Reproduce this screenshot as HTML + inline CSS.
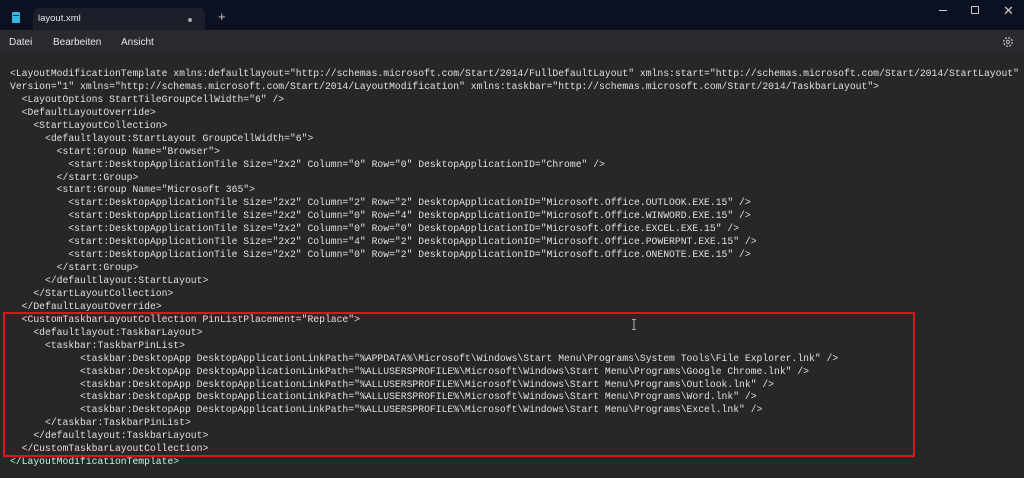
<!DOCTYPE html>
<html><head><meta charset="utf-8"><style>
body{margin:0;width:1024px;height:478px;background:#272727;overflow:hidden;position:relative;font-family:"Liberation Sans",sans-serif}
.title{position:absolute;left:0;top:0;width:1024px;height:30px;background:#0c1121}
.tab{position:absolute;left:33px;top:8px;width:172px;height:22px;background:#1c1f2a;border-radius:6px 6px 0 0}
.menu{position:absolute;left:0;top:30px;width:1024px;height:24px;background:#282a30}
.t{position:absolute;color:#e6e6e6;font-size:10px}
pre{position:absolute;left:10px;top:68px;margin:0;font-family:"Liberation Mono",monospace;font-size:9.73px;line-height:12.93px;color:#e0e0e0}
.box{position:absolute;left:3px;top:312px;width:908px;height:141px;border:2px solid #e0141a}
</style></head><body>
<div class="title"></div>
<div class="tab"></div>
<div style="position:absolute;left:12px;top:12px;width:8px;height:11px;background:#38b6e6;border-radius:1px"></div>
<div style="position:absolute;left:13px;top:15px;width:6px;height:1px;background:#0c3d55"></div>
<div class="t" style="left:38px;top:13px;font-size:9.5px">layout.xml</div>
<div style="position:absolute;left:188px;top:18px;width:4px;height:4px;border-radius:50%;background:#aaa"></div>
<div class="t" style="left:218px;top:9px;font-size:13px;color:#ccc">+</div>
<div style="position:absolute;left:939px;top:10px;width:8px;height:1px;background:#ccc"></div>
<div style="position:absolute;left:971px;top:6px;width:6px;height:6px;border:1px solid #ccc;border-radius:1px"></div>
<div class="t" style="left:1003px;top:3px;font-size:13px;color:#ccc">✕</div>
<div class="menu"></div>
<div class="t" style="left:9px;top:37px">Datei</div>
<div class="t" style="left:53px;top:37px">Bearbeiten</div>
<div class="t" style="left:121px;top:37px">Ansicht</div>
<svg style="position:absolute;left:1002px;top:36px" width="12" height="12" viewBox="0 0 12 12"><circle cx="6" cy="6" r="4.3" fill="none" stroke="#bbb" stroke-width="1.3" stroke-dasharray="2 1.4"/><circle cx="6" cy="6" r="1.6" fill="none" stroke="#bbb"/></svg>
<pre>&lt;LayoutModificationTemplate xmlns:defaultlayout="http://schemas.microsoft.com/Start/2014/FullDefaultLayout" xmlns:start="http://schemas.microsoft.com/Start/2014/StartLayout"
Version="1" xmlns="http://schemas.microsoft.com/Start/2014/LayoutModification" xmlns:taskbar="http://schemas.microsoft.com/Start/2014/TaskbarLayout"&gt;
  &lt;LayoutOptions StartTileGroupCellWidth="6" /&gt;
  &lt;DefaultLayoutOverride&gt;
    &lt;StartLayoutCollection&gt;
      &lt;defaultlayout:StartLayout GroupCellWidth="6"&gt;
        &lt;start:Group Name="Browser"&gt;
          &lt;start:DesktopApplicationTile Size="2x2" Column="0" Row="0" DesktopApplicationID="Chrome" /&gt;
        &lt;/start:Group&gt;
        &lt;start:Group Name="Microsoft 365"&gt;
          &lt;start:DesktopApplicationTile Size="2x2" Column="2" Row="2" DesktopApplicationID="Microsoft.Office.OUTLOOK.EXE.15" /&gt;
          &lt;start:DesktopApplicationTile Size="2x2" Column="0" Row="4" DesktopApplicationID="Microsoft.Office.WINWORD.EXE.15" /&gt;
          &lt;start:DesktopApplicationTile Size="2x2" Column="0" Row="0" DesktopApplicationID="Microsoft.Office.EXCEL.EXE.15" /&gt;
          &lt;start:DesktopApplicationTile Size="2x2" Column="4" Row="2" DesktopApplicationID="Microsoft.Office.POWERPNT.EXE.15" /&gt;
          &lt;start:DesktopApplicationTile Size="2x2" Column="0" Row="2" DesktopApplicationID="Microsoft.Office.ONENOTE.EXE.15" /&gt;
        &lt;/start:Group&gt;
      &lt;/defaultlayout:StartLayout&gt;
    &lt;/StartLayoutCollection&gt;
  &lt;/DefaultLayoutOverride&gt;
  &lt;CustomTaskbarLayoutCollection PinListPlacement="Replace"&gt;
    &lt;defaultlayout:TaskbarLayout&gt;
      &lt;taskbar:TaskbarPinList&gt;
            &lt;taskbar:DesktopApp DesktopApplicationLinkPath="%APPDATA%\Microsoft\Windows\Start Menu\Programs\System Tools\File Explorer.lnk" /&gt;
            &lt;taskbar:DesktopApp DesktopApplicationLinkPath="%ALLUSERSPROFILE%\Microsoft\Windows\Start Menu\Programs\Google Chrome.lnk" /&gt;
            &lt;taskbar:DesktopApp DesktopApplicationLinkPath="%ALLUSERSPROFILE%\Microsoft\Windows\Start Menu\Programs\Outlook.lnk" /&gt;
            &lt;taskbar:DesktopApp DesktopApplicationLinkPath="%ALLUSERSPROFILE%\Microsoft\Windows\Start Menu\Programs\Word.lnk" /&gt;
            &lt;taskbar:DesktopApp DesktopApplicationLinkPath="%ALLUSERSPROFILE%\Microsoft\Windows\Start Menu\Programs\Excel.lnk" /&gt;
      &lt;/taskbar:TaskbarPinList&gt;
    &lt;/defaultlayout:TaskbarLayout&gt;
  &lt;/CustomTaskbarLayoutCollection&gt;
&lt;/LayoutModificationTemplate&gt;</pre>
<div class="box"></div>
<svg style="position:absolute;left:631px;top:319px" width="6" height="11" viewBox="0 0 6 11"><path d="M1 .5h4M3 .5v10M1 10.5h4" stroke="#aaa" fill="none"/></svg>
</body></html>
